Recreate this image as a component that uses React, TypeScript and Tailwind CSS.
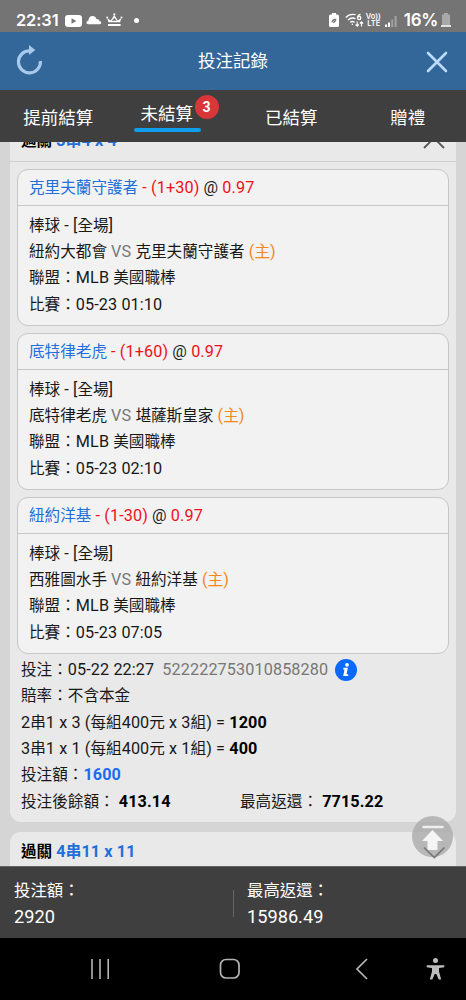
import React from 'react';

interface Leg {
    team: string;
    handicap: string;
    odds: string;
    away: string;
    home: string;
    time: string;
}

const legs: Leg[] = [
    { team: '克里夫蘭守護者', handicap: '(1+30)', odds: '0.97', away: '紐約大都會', home: '克里夫蘭守護者', time: '05-23 01:10' },
    { team: '底特律老虎', handicap: '(1+60)', odds: '0.97', away: '底特律老虎', home: '堪薩斯皇家', time: '05-23 02:10' },
    { team: '紐約洋基', handicap: '(1-30)', odds: '0.97', away: '西雅圖水手', home: '紐約洋基', time: '05-23 07:05' },
];

const tabs = [
    { label: '提前結算' },
    { label: '未結算', count: 3 },
    { label: '已結算' },
    { label: '贈禮' },
];

// Latin runs are set slightly larger than the Chinese around them
const Mix: React.FC<{ text: string }> = ({ text }) => (
    <>
        {text.split(/([\x20-\x7e]+)/).map((part, i) =>
            i % 2 ? <span key={i} className="text-[16.2px] tracking-[0.12px]">{part}</span> : part
        )}
    </>
);

const StatusBar = () => (
    <div className="flex h-8 shrink-0 items-center bg-[#747474] pt-2 pr-[15px] pl-4 font-['Inter',sans-serif] text-white">
        <span className="w-[49px] text-[16.4px] leading-6 font-semibold tracking-[-0.1px]">22:31</span>
        <svg width="17" height="12" viewBox="0 0 17 12" className="mt-px">
            <rect width="17" height="12" rx="3" fill="#fff" />
            <path d="M6.5 3.2v5.6L11.3 6z" fill="#747474" />
        </svg>
        <svg width="16" height="10" viewBox="0 0 16 10" className="ml-1" fill="#fff">
            <path d="M2.3 9.3C-.2 9-.3 6 2.3 5.7 2.7 2.8 4 1 6.5 1c2.1 0 3.4 1.2 4 3 1.6-.2 2.7.6 3 2 2 .1 2.4 3 .2 3.3z" />
        </svg>
        <svg width="17" height="14" viewBox="0 0 17 14" className="ml-1" fill="#fff">
            <path d="M2.5 9.3 1.2 5l3.5 2.6L8.3 2l3.6 5.6L15.4 5l-1.3 4.3z" />
            <path d="M5.8 7.8 8.3 4.8l2.5 3z" fill="#747474" />
            <circle cx="8.3" cy="1.4" r="1.1" /><circle cx="1.2" cy="4.5" r="1" /><circle cx="15.5" cy="4.5" r="1" />
            <path d="M2 11h12.6v2H2z" />
        </svg>
        <span className="ml-[11px] size-[5px] rounded-full bg-white" />
        <svg width="10" height="14" viewBox="0 0 10 14" className="ml-auto">
            <path d="M3 0h4v1.5h1.5Q10 1.5 10 3v9.5Q10 14 8.5 14h-7Q0 14 0 12.5V3q0-1.500 1.500-1.500H3z" fill="#fff" />
            <path d="M2.600 9.800C2 7 4 5.500 7.400 5.500 7.700 9 6 10.800 2.600 9.800zM2.200 10.500 5.800 7.300" fill="#747474" stroke="#fff" strokeWidth=".5" />
        </svg>
        <svg width="19" height="15" viewBox="0 0 19 15" className="ml-[6px]" fill="none" stroke="#fff" strokeWidth="1.300">
            <path d="M.8 4.500C3.500 1.400 7 .8 10.500 1.700M3 7c2.200-2 5-2.500 7.500-1.300M5.200 9.300c1.500-1.100 3-1.100 4.400 0" />
            <circle cx="7.400" cy="11.200" r=".8" fill="#fff" stroke="none" />
            <circle cx="14.200" cy="5" r="1.600" />
            <path d="M12.600 4.800C12.600 2.700 13.700 1.500 15.500 1.500" />
            <path d="M12.200 8.500v4.500m-1.600-1.500 1.600 1.600 1.600-1.600M16.500 13.500V9m-1.600 1.500 1.600-1.600 1.600 1.600" strokeWidth="1.100" />
        </svg>
        <div className="ml-[3px] w-[14px] text-center text-[7.5px] leading-[7px] font-semibold">
            <div className="-ml-px whitespace-nowrap">Vo))</div>
            <div>LTE</div>
        </div>
        <svg width="13" height="13" viewBox="0 0 13 13" className="ml-[4px]">
            <path d="M0 10.500h2V13H0zM3 8.500h2V13H3z" fill="#fff" />
            <path d="M6.200 5.500h2V13h-2zM9.500 2h2.200v11H9.500z" fill="#a0a0a0" />
        </svg>
        <span className="ml-[6px] text-[17px] leading-6 font-semibold tracking-[-0.3px]">16%</span>
        <svg width="10" height="14" viewBox="0 0 10 14" className="ml-[3px]">
            <path d="M3 0h4v1.500h2V12.500H1V1.500h2z" fill="#a9a9a9" />
            <path d="M0 12h10v2H0z" fill="#e0e0e0" />
        </svg>
    </div>
);

const Header = () => (
    <header className="relative flex h-[58px] shrink-0 items-center justify-center bg-[#336699]">
        <svg width="28" height="32" viewBox="0 0 28 32" className="absolute top-3 left-[15px]" fill="none">
            <path d="M15.2 6.900A11 11 0 1 0 25.400 17" stroke="#a9c9eb" strokeWidth="3.200" />
            <path d="M14 1v10l6.300-5z" fill="#a9c9eb" />
        </svg>
        <h1 className="pt-px text-[17.5px] text-white">投注記錄</h1>
        <svg width="22" height="22" viewBox="0 0 22 22" className="absolute top-[19px] right-[18px]" stroke="#bcdcff" strokeWidth="2.600" strokeLinecap="round">
            <path d="M2 2l18 18M20 2 2 20" />
        </svg>
    </header>
);

const Tabs = () => (
    <nav className="grid h-[52px] shrink-0 grid-cols-4 bg-[#3f3f3f] text-[17.5px] text-white">
        {tabs.map(tab => tab.count ? (
            <button key={tab.label} className="relative flex justify-center pr-[16px]">
                <span className="mt-[11px] leading-[26px]">{tab.label}</span>
                <span className="absolute top-[5px] left-[78px] flex size-6 items-center justify-center rounded-full bg-[#d9363a] text-[14px] font-bold">{tab.count}</span>
                <span className="absolute top-[38px] left-[17px] h-1 w-[67px] rounded-full bg-[#109fee]" />
            </button>
        ) : (
            <button key={tab.label} className="pt-[4px]">{tab.label}</button>
        ))}
    </nav>
);

const LegCard: React.FC<{ leg: Leg }> = ({ leg }) => (
    <div className="h-[157px] rounded-[11px] border border-[#c6c6c6] bg-[#f2f2f2]">
        <div className="h-9 border-b border-[#c6c6c6] pl-[11px] leading-[35px] text-[#ed111c]">
            <span className="text-[#206fdb]">{leg.team}</span>
            <Mix text={` - ${leg.handicap} `} />
            <span className="text-[#222]"><Mix text="@ " /></span>
            <Mix text={leg.odds} />
        </div>
        <div className="pt-[7px] pl-[11px] leading-[26.2px]">
            <p><Mix text="棒球 - [全場]" /></p>
            <p>
                {leg.away}
                <span className="text-[#777]"><Mix text=" VS " /></span>
                {leg.home}
                <span className="text-[#f5871b]"><Mix text=" (主)" /></span>
            </p>
            <p><Mix text="聯盟：MLB 美國職棒" /></p>
            <p><Mix text={`比賽：${leg.time}`} /></p>
        </div>
    </div>
);

const Summary = () => (
    <div className="px-[11px] pt-[3px] leading-[26.35px]">
        <div className="flex items-center">
            <Mix text="投注：05-22 22:27" />
            <span className="ml-[8px] text-[#777]"><Mix text="522222753010858280" /></span>
            <svg width="22" height="22" viewBox="0 0 22 22" className="ml-[7px]">
                <circle cx="11" cy="11" r="11" fill="#0869fb" />
                <circle cx="12" cy="5.800" r="1.900" fill="#fff" />
                <path d="M8.500 8.800h4.400l-1.400 6.500h1.700v1.800H8.200l1.300-6.500h-1.300z" fill="#fff" />
            </svg>
        </div>
        <p><Mix text="賠率：不含本金" /></p>
        <p><Mix text="2串1 x 3 (每組400元 x 3組) = " /><b className="text-black"><Mix text="1200" /></b></p>
        <p><Mix text="3串1 x 1 (每組400元 x 1組) = " /><b className="text-black"><Mix text="400" /></b></p>
        <p>投注額：<b className="text-[#1a6cf0]"><Mix text="1600" /></b></p>
        <div className="flex">
            <p className="w-[219px]">投注後餘額：<b className="text-black"><Mix text=" 413.14" /></b></p>
            <p>最高返還：<b className="text-black"><Mix text=" 7715.22" /></b></p>
        </div>
    </div>
);

const Footer = () => (
    <footer className="flex h-[72px] shrink-0 items-center border-t border-[#606060] bg-[#3f3f3f] pt-[2px] text-[16.4px] leading-[26px] text-white">
        <div className="w-[233px] pl-[14px]">
            <p>投注額：</p>
            <p className="text-[18.2px]">2920</p>
        </div>
        <div className="flex h-[27px] flex-1 items-center border-l border-[#666] pl-[13px]">
            <div>
                <p>最高返還：</p>
                <p className="text-[18.2px]">15986.49</p>
            </div>
        </div>
    </footer>
);

const NavBar = () => (
    <div className="flex h-[62px] shrink-0 items-center bg-black pl-[90px]">
        <svg width="20" height="20" viewBox="0 0 20 20" stroke="#b5b5b5" strokeWidth="1.600">
            <path d="M2 0v20M10 0v20M18.200 0v20" />
        </svg>
        <svg width="22" height="22" viewBox="0 0 22 22" className="ml-[109px]" fill="none" stroke="#b5b5b5" strokeWidth="1.700">
            <rect x="1.500" y="1.500" width="18.500" height="18.500" rx="5.500" />
        </svg>
        <svg width="14" height="22" viewBox="0 0 14 22" className="ml-[114px]" fill="none" stroke="#b5b5b5" strokeWidth="1.700">
            <path d="M12 1 2 11l10 10" />
        </svg>
        <svg width="20" height="24" viewBox="0 0 20 24" className="ml-[57px]" fill="#bdbdbd">
            <circle cx="9.500" cy="3.500" r="2.500" />
            <path d="M.7 8.300h17.600v2l-5.300.8v3.500l2.200 8h-2.500L10.300 17H8.700l-2.400 5.600H3.800l2.200-8v-3.500l-5.300-.8z" />
        </svg>
    </div>
);

const App: React.FC = () => {
    return (
        <div className="flex h-[1000px] w-[466px] flex-col overflow-hidden bg-[#d5d5d5] font-[Roboto,'Noto_Sans_CJK_TC',sans-serif] text-[15.6px] text-[#181818]">
            <StatusBar />
            <Header />
            <Tabs />
            <main className="relative min-h-0 flex-1 overflow-hidden px-[10px]">
                {/* Open ticket, scrolled partly under the tabs */}
                <section className="-mt-[21px] h-[701px] rounded-[11px] bg-[#e9e9e9]">
                    <div className="flex h-[41px] items-center justify-between border-b border-[#cfcfcf] pt-px pr-[11px] pl-[11px] font-bold">
                        <p><span className="text-black">過關</span><span className="text-[#206fdb]"><Mix text=" 3串4 x 4" /></span></p>
                        <svg width="22" height="12" viewBox="0 0 22 12" className="mt-[2px]" fill="none" stroke="#555" strokeWidth="1.800">
                            <path d="M1 11 11 1l10 10" />
                        </svg>
                    </div>
                    <div className="space-y-[7px] px-[7px] pt-[7px]">
                        {legs.map(leg => <LegCard key={leg.team} leg={leg} />)}
                    </div>
                    <Summary />
                </section>
                {/* Next ticket, collapsed */}
                <section className="mt-[10px] h-[60px] rounded-[11px] bg-[#e9e9e9] pt-[7px] pl-[11px] leading-[26px] font-bold">
                    <span className="text-black">過關</span><span className="text-[#206fdb]"><Mix text=" 4串11 x 11" /></span>
                </section>
                <button className="absolute top-[674px] left-[412px] size-[41px]">
                    <svg width="41" height="43" viewBox="0 0 41 43">
                        <circle cx="20.500" cy="20.500" r="20.500" fill="#aaa" fillOpacity=".8" />
                        <path d="M11.500 11h19" stroke="#eee" strokeWidth="2.600" strokeLinecap="round" />
                        <path d="M20.500 14 31 25h-5.500v9h-10v-9H10z" fill="#f5f5f5" />
                        <path d="M12 31.500 22.300 41.500l10.200-10" fill="none" stroke="#777" strokeWidth="1.700" />
                    </svg>
                </button>
            </main>
            <Footer />
            <NavBar />
        </div>
    );
};

export default App;
